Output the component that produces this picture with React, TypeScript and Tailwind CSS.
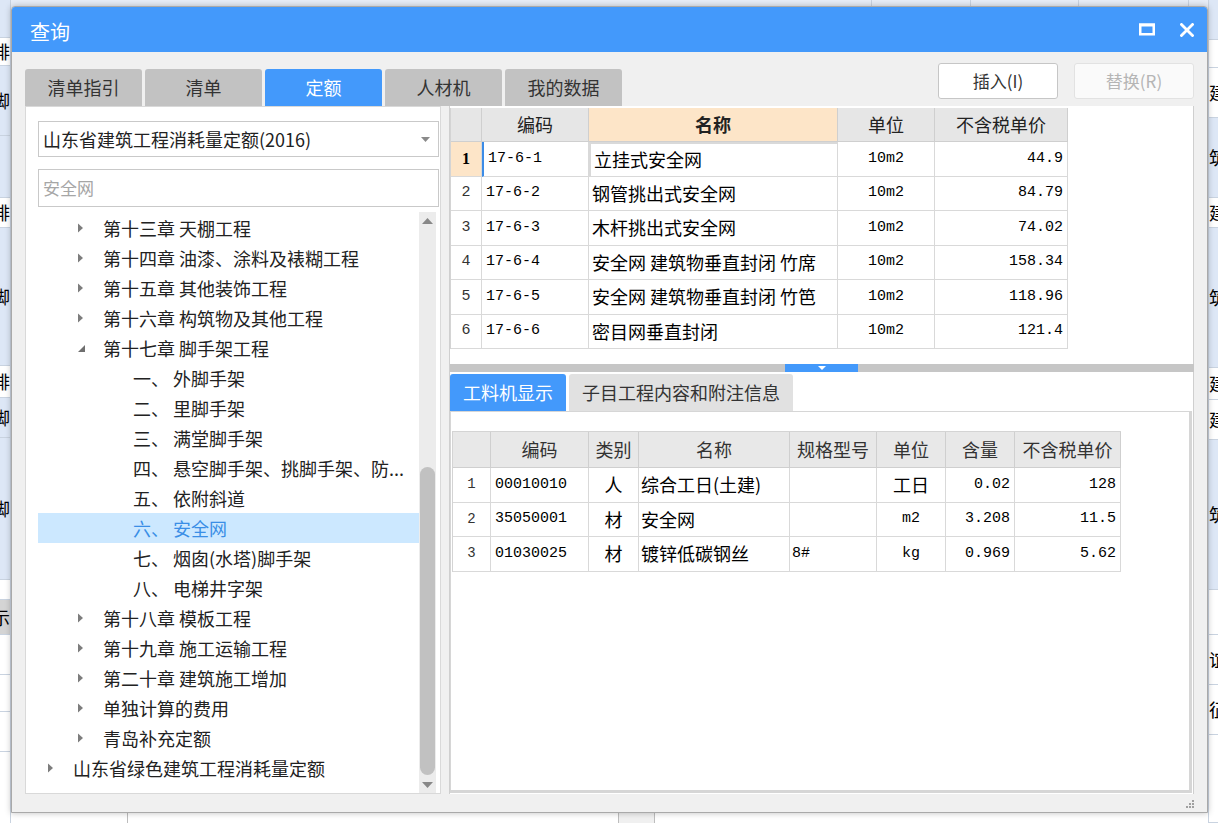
import React from 'react';

const cjk = "font-['Noto_Sans_CJK_SC',sans-serif]";
const mono = "font-['Liberation_Mono','Noto_Sans_CJK_SC',monospace]";

type TreeRow = { lvl: number; arrow?: 'right' | 'down'; text: string; selected?: boolean };

const treeRows: TreeRow[] = [
  { lvl: 1, arrow: 'right', text: '第十三章 天棚工程' },
  { lvl: 1, arrow: 'right', text: '第十四章 油漆、涂料及裱糊工程' },
  { lvl: 1, arrow: 'right', text: '第十五章 其他装饰工程' },
  { lvl: 1, arrow: 'right', text: '第十六章 构筑物及其他工程' },
  { lvl: 1, arrow: 'down', text: '第十七章 脚手架工程' },
  { lvl: 2, text: '一、 外脚手架' },
  { lvl: 2, text: '二、 里脚手架' },
  { lvl: 2, text: '三、 满堂脚手架' },
  { lvl: 2, text: '四、 悬空脚手架、挑脚手架、防...' },
  { lvl: 2, text: '五、 依附斜道' },
  { lvl: 2, text: '六、 安全网', selected: true },
  { lvl: 2, text: '七、 烟囱(水塔)脚手架' },
  { lvl: 2, text: '八、 电梯井字架' },
  { lvl: 1, arrow: 'right', text: '第十八章 模板工程' },
  { lvl: 1, arrow: 'right', text: '第十九章 施工运输工程' },
  { lvl: 1, arrow: 'right', text: '第二十章 建筑施工增加' },
  { lvl: 1, arrow: 'right', text: '单独计算的费用' },
  { lvl: 1, arrow: 'right', text: '青岛补充定额' },
  { lvl: 0, arrow: 'right', text: '山东省绿色建筑工程消耗量定额' },
];

const quotaRows = [
  ['17-6-1', '立挂式安全网', '10m2', '44.9'],
  ['17-6-2', '钢管挑出式安全网', '10m2', '84.79'],
  ['17-6-3', '木杆挑出式安全网', '10m2', '74.02'],
  ['17-6-4', '安全网 建筑物垂直封闭 竹席', '10m2', '158.34'],
  ['17-6-5', '安全网 建筑物垂直封闭 竹笆', '10m2', '118.96'],
  ['17-6-6', '密目网垂直封闭', '10m2', '121.4'],
];

const materialRows = [
  ['00010010', '人', '综合工日(土建)', '', '工日', '0.02', '128'],
  ['35050001', '材', '安全网', '', 'm2', '3.208', '11.5'],
  ['01030025', '材', '镀锌低碳钢丝', '8#', 'kg', '0.969', '5.62'],
];

// what shows of the spreadsheet behind the dialog
const leftStrip: [number, string, string][] = [
  [38, 'bg-[#dde7f6]', ''],
  [28, 'bg-white', '排'],
  [70, 'bg-[#dde7f6]', '脚'],
  [62, 'bg-[#dde7f6]', ''],
  [30, 'bg-white', '排'],
  [138, 'bg-[#dde7f6]', '脚'],
  [32, 'bg-white', '排'],
  [40, 'bg-[#dde7f6]', '脚'],
  [142, 'bg-[#dde7f6]', '脚'],
  [20, 'bg-white', ''],
  [35, 'bg-[#d4d4d4]', '示'],
  [40, 'bg-white', ''],
  [37, 'bg-white', ''],
  [40, 'bg-white', ''],
  [75, 'bg-white', ''],
];

const rightStrip: [number, string, string][] = [
  [40, 'bg-[#dde7f6]', ''],
  [28, 'bg-white', ''],
  [50, 'bg-white', '建'],
  [80, 'bg-[#dde7f6]', '筑'],
  [30, 'bg-white', '建'],
  [140, 'bg-[#dde7f6]', '筑'],
  [32, 'bg-white', '建'],
  [40, 'bg-white', '建'],
  [150, 'bg-[#dde7f6]', '筑'],
  [45, 'bg-white', ''],
  [50, 'bg-white', '谊'],
  [50, 'bg-white', '征'],
  [88, 'bg-white', ''],
];

function Strip({ cells, align }: { cells: [number, string, string][]; align: 'left' | 'right' }) {
  return (
    <div className="flex flex-col w-full">
      {cells.map(([h, bg, ch], i) => (
        <div
          key={i}
          style={{ height: h }}
          className={`${bg} border-b border-[#c9d3e0] flex items-center overflow-hidden whitespace-nowrap text-[18px] text-black ${cjk} ${align === 'left' ? 'justify-end' : 'justify-start'}`}
        >
          {ch}
        </div>
      ))}
    </div>
  );
}

function Arrow({ dir }: { dir: 'right' | 'down' }) {
  if (dir === 'down')
    return (
      <svg width="9" height="9" viewBox="0 0 9 9">
        <path d="M8 1 L8 8 L1 8 Z" fill="#6f6f6f" />
      </svg>
    );
  return (
    <svg width="7" height="10" viewBox="0 0 7 10">
      <path d="M1 0.5 L6 5 L1 9.5 Z" fill="#7d7d7d" />
    </svg>
  );
}

function Tree() {
  return (
    <div className="flex flex-1 min-h-0 mt-[5px]">
      <div className="flex-1 flex flex-col pt-[1px]">
        {treeRows.map((r, i) => {
          const arrowLeft = r.lvl === 0 ? 'ml-[9px]' : 'ml-[39px]';
          const textPad = r.lvl === 0 ? 'pl-[35px]' : r.lvl === 1 ? 'pl-[65px]' : 'pl-[95px]';
          return (
            <div
              key={i}
              className={`relative h-[30px] flex items-center text-[18px] whitespace-nowrap ${cjk} ${r.selected ? 'bg-[#cce8ff] text-[#3a8ee6]' : 'text-[#222]'}`}
            >
              {r.arrow && (
                <span className={`absolute left-0 top-0 h-[30px] flex items-center ${arrowLeft}`}>
                  <Arrow dir={r.arrow} />
                </span>
              )}
              <span className={textPad}>{r.text}</span>
            </div>
          );
        })}
      </div>
      {/* scrollbar */}
      <div className="w-[17px] bg-[#ececec] flex flex-col items-center mr-[4px]">
        <div className="h-[17px] flex items-center justify-center">
          <svg width="11" height="6" viewBox="0 0 11 6">
            <path d="M0 6 L5.5 0 L11 6 Z" fill="#888" />
          </svg>
        </div>
        <div className="h-[238px]" />
        <div className="w-[15px] h-[308px] rounded-full bg-[#c1c1c1]" />
        <div className="flex-1" />
        <div className="h-[17px] flex items-center justify-center">
          <svg width="11" height="6" viewBox="0 0 11 6">
            <path d="M0 0 L5.5 6 L11 0 Z" fill="#888" />
          </svg>
        </div>
      </div>
    </div>
  );
}

function LeftPanel() {
  return (
    <div className="w-[416px] bg-white border border-[#d9d9d9] flex flex-col pl-[12px]">
      <div className={`mt-[14px] h-[36px] w-[401px] border border-[#c9c9c9] flex items-center justify-between pl-[4px] pr-[8px] text-[18px] text-[#222] ${cjk}`}>
        <span>山东省建筑工程消耗量定额(2016)</span>
        <svg width="9" height="5" viewBox="0 0 9 5">
          <path d="M0 0 L4.5 5 L9 0 Z" fill="#8a8a8a" />
        </svg>
      </div>
      <div className={`mt-[12px] h-[38px] w-[401px] border border-[#c9c9c9] flex items-center pl-[4px] text-[17px] text-[#a6a6a6] ${cjk}`}>
        安全网
      </div>
      <Tree />
    </div>
  );
}

function QuotaTable() {
  const cols = 'grid grid-cols-[31px_107px_249px_97px_133px] w-[617px]';
  return (
    <div className="border-l border-[#d4d4d4] w-max">
      <div className={`${cols} h-[34px] text-[18px] text-[#222] ${cjk}`}>
        <div className="bg-[#e6e6e6] border-r border-b border-[#cfcfcf]" />
        <div className="bg-[#e6e6e6] border-r border-b border-[#cfcfcf] flex items-center justify-center">编码</div>
        <div className="bg-[#fde5c8] border-r border-b border-[#cfcfcf] flex items-center justify-center font-bold">名称</div>
        <div className="bg-[#e6e6e6] border-r border-b border-[#cfcfcf] flex items-center justify-center">单位</div>
        <div className="bg-[#e6e6e6] border-r border-b border-[#cfcfcf] flex items-center justify-center">不含税单价</div>
      </div>
      {quotaRows.map((r, i) => (
        <div key={i} className={`${cols} h-[34.5px] text-black`}>
          <div
            className={`border-r border-b border-[#d9d9d9] flex items-center justify-center text-[15px] ${i === 0 ? "bg-[#fde5c8] font-bold font-['Liberation_Serif',serif] text-[16px]" : `${mono} text-[#333]`}`}
          >
            {i + 1}
          </div>
          <div className={`border-r border-b border-[#d9d9d9] flex items-center pl-[4px] text-[15px] ${mono} ${i === 0 ? 'border-l-2 border-l-[#3c8ce7]' : ''}`}>
            {r[0]}
          </div>
          <div className={`border-r border-b border-[#d9d9d9] flex items-center pl-[3px] text-[18px] ${cjk} ${i === 0 ? 'border-2 border-[#6f6f6f]' : ''}`}>
            {r[1]}
          </div>
          <div className={`border-r border-b border-[#d9d9d9] flex items-center justify-center text-[15px] ${mono}`}>{r[2]}</div>
          <div className={`border-r border-b border-[#d9d9d9] flex items-center justify-end pr-[4px] text-[15px] ${mono}`}>{r[3]}</div>
        </div>
      ))}
    </div>
  );
}

function MaterialTable() {
  const cols = 'grid grid-cols-[38px_98px_50px_151px_87px_69px_69px_106px] w-[668px]';
  const head = ['', '编码', '类别', '名称', '规格型号', '单位', '含量', '不含税单价'];
  return (
    <div className="border-l border-t border-[#d4d4d4] w-max ml-[1px]">
      <div className={`${cols} h-[36px] text-[18px] text-[#333] ${cjk}`}>
        {head.map((h, i) => (
          <div key={i} className="bg-[#e8e8e8] border-r border-b border-[#cfcfcf] flex items-center justify-center">
            {h}
          </div>
        ))}
      </div>
      {materialRows.map((r, i) => {
        const unitIsCjk = /[\u4e00-\u9fa5]/.test(r[4]);
        return (
          <div key={i} className={`${cols} h-[34.5px] text-black`}>
            <div className={`border-r border-b border-[#d9d9d9] flex items-center justify-center text-[14px] text-[#333] ${mono}`}>{i + 1}</div>
            <div className={`border-r border-b border-[#d9d9d9] flex items-center pl-[4px] text-[15px] ${mono}`}>{r[0]}</div>
            <div className={`border-r border-b border-[#d9d9d9] flex items-center justify-center text-[18px] ${cjk}`}>{r[1]}</div>
            <div className={`border-r border-b border-[#d9d9d9] flex items-center pl-[2px] text-[18px] ${cjk}`}>{r[2]}</div>
            <div className={`border-r border-b border-[#d9d9d9] flex items-center pl-[2px] text-[15px] ${mono}`}>{r[3]}</div>
            <div className={`border-r border-b border-[#d9d9d9] flex items-center justify-center ${unitIsCjk ? `text-[18px] ${cjk}` : `text-[15px] ${mono}`}`}>{r[4]}</div>
            <div className={`border-r border-b border-[#d9d9d9] flex items-center justify-end pr-[4px] text-[15px] ${mono}`}>{r[5]}</div>
            <div className={`border-r border-b border-[#d9d9d9] flex items-center justify-end pr-[4px] text-[15px] ${mono}`}>{r[6]}</div>
          </div>
        );
      })}
    </div>
  );
}

function RightPanel() {
  return (
    <div className="flex-1 flex flex-col border-l border-[#cfcfcf] ml-[8px]">
      <div className="h-[258px] bg-white pt-[2px] border-r border-[#cfcfcf]">
        <QuotaTable />
      </div>
      {/* splitter */}
      <div className="h-[8px] bg-[#c6c6c6] flex">
        <div className="w-[335px]" />
        <div className="w-[73px] bg-[#4399fb] flex items-center justify-center">
          <svg width="8" height="4" viewBox="0 0 8 4">
            <path d="M0 0 L4 4 L8 0 Z" fill="#fff" />
          </svg>
        </div>
      </div>
      <div className="flex-1 bg-white flex flex-col pt-[2px] border-r border-[#cfcfcf]">
        <div className={`flex gap-[3px] h-[37px] text-[18px] ${cjk}`}>
          <div className="w-[116px] rounded-t-[3px] bg-[#4399fb] text-white flex items-center justify-center">工料机显示</div>
          <div className="w-[224px] rounded-t-[3px] bg-[#e1e1e1] text-[#333] flex items-center justify-center">子目工程内容和附注信息</div>
        </div>
        <div className="flex-1 border-t border-l border-r-[3px] border-b-[3px] border-[#d6d6d6] mr-[1px] mb-[1px] flex flex-col">
          <div className="h-[19px]" />
          <MaterialTable />
        </div>
      </div>
    </div>
  );
}

export default function App() {
  return (
    <div className="relative w-[1218px] h-[823px] overflow-hidden bg-white">
      {/* underlying application */}
      <div className="flex h-full">
        <div className="w-[11px] border-r border-[#c9d3e0]">
          <Strip cells={leftStrip} align="left" />
        </div>
        <div className="flex-1 flex flex-col">
          <div className="h-[8px] bg-[#e7edf7] flex">
            <div className="w-[861px] border-r border-[#c9d3e0]" />
            <div className="w-[99px] border-r border-[#c9d3e0]" />
            <div className="w-[108px] border-r border-[#c9d3e0]" />
            <div className="w-[110px] border-r border-[#c9d3e0]" />
          </div>
          <div className="flex-1" />
          <div className="h-[10px] flex">
            <div className="w-[117px] border-r border-[#bdbdbd]" />
            <div className="w-[490px]" />
            <div className="w-[37px] bg-[#f0f0f0] border-x border-[#bdbdbd]" />
          </div>
        </div>
        <div className="w-[10px] border-l border-[#c9d3e0]">
          <Strip cells={rightStrip} align="right" />
        </div>
      </div>

      {/* query dialog */}
      <div className="absolute left-[11px] top-[6px] w-[1197px] h-[807px] flex flex-col bg-[#f0f0f0] border border-[#a9a9a9] rounded-t-[4px] shadow-[0_0_6px_rgba(0,0,0,0.25)] overflow-hidden">
        <div className="h-[45px] shrink-0 bg-[#4399fb] flex items-center justify-between pl-[18px] pr-[13px]">
          <span className={`text-[20px] text-white pt-[4px] ${cjk}`}>查询</span>
          <div className="flex items-center gap-[25px]">
            <svg width="16" height="13" viewBox="0 0 16 13">
              <rect x="1.25" y="1.75" width="13.5" height="9.5" fill="none" stroke="#fff" strokeWidth="2.5" />
              <rect x="0" y="0.5" width="16" height="3" fill="#fff" />
            </svg>
            <svg width="14" height="14" viewBox="0 0 14 14">
              <path d="M1.5 1.5 L12.5 12.5 M12.5 1.5 L1.5 12.5" stroke="#fff" strokeWidth="2.8" strokeLinecap="square" />
            </svg>
          </div>
        </div>

        <div className="flex-1 flex flex-col px-[13px]">
          <div className="h-[54px] shrink-0 flex justify-between">
            <div className={`self-end flex gap-[3px] text-[18px] ${cjk}`}>
              {['清单指引', '清单', '定额', '人材机', '我的数据'].map((t) => (
                <div
                  key={t}
                  className={`w-[117px] h-[37px] rounded-t-[3px] flex items-center justify-center ${t === '定额' ? 'bg-[#4399fb] text-white' : 'bg-[#c2c2c2] text-[#333]'}`}
                >
                  {t}
                </div>
              ))}
            </div>
            <div className={`flex gap-[16px] pt-[11px] text-[17px] ${cjk}`}>
              <button className="w-[120px] h-[36px] bg-white border border-[#c6c6c6] rounded-[3px] text-[#333] flex items-center justify-center">
                插入(I)
              </button>
              <button className="w-[120px] h-[36px] bg-[#fafafa] border border-[#e2e2e2] rounded-[3px] text-[#b5b5b5] flex items-center justify-center">
                替换(R)
              </button>
            </div>
          </div>

          <div className="h-[688px] shrink-0 flex">
            <LeftPanel />
            <RightPanel />
          </div>

          <div className="flex-1 flex justify-end items-end pb-[4px]">
            <svg width="8" height="8" viewBox="0 0 8 8">
              <rect x="6" y="0" width="2" height="2" fill="#a0a0a0" />
              <rect x="3" y="3" width="2" height="2" fill="#a0a0a0" />
              <rect x="6" y="3" width="2" height="2" fill="#a0a0a0" />
              <rect x="0" y="6" width="2" height="2" fill="#a0a0a0" />
              <rect x="3" y="6" width="2" height="2" fill="#a0a0a0" />
              <rect x="6" y="6" width="2" height="2" fill="#a0a0a0" />
            </svg>
          </div>
        </div>
      </div>
    </div>
  );
}
